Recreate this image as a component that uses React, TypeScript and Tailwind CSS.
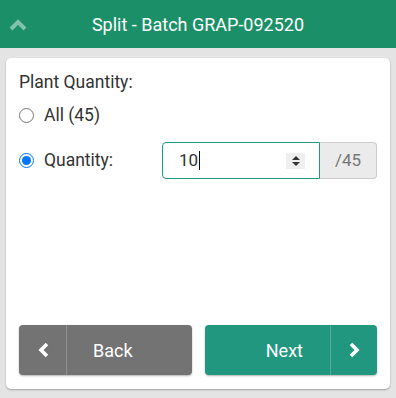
import React from "react";

function ChevronUp() {
  return (
    <svg width="18" height="12" viewBox="0 0 18 12" className="block">
      <polyline
        points="2,10 9,3 16,10"
        fill="none"
        stroke="rgba(255,255,255,0.45)"
        strokeWidth="4"
        strokeLinejoin="miter"
      />
    </svg>
  );
}

function Chevron({ dir }: { dir: "left" | "right" }) {
  const points = dir === "left" ? "10,2 4,8 10,14" : "4,2 10,8 4,14";
  return (
    <svg width="14" height="16" viewBox="0 0 14 16" className="block">
      <polyline
        points={points}
        fill="none"
        stroke="#ffffff"
        strokeWidth="3.6"
        strokeLinejoin="miter"
      />
    </svg>
  );
}

function Spinner() {
  return (
    <span className="flex h-[16px] w-[19px] flex-col items-center justify-center gap-[2px] bg-[#efefef]">
      <span className="h-0 w-0 border-x-[4px] border-b-[4px] border-x-transparent border-b-[#333]" />
      <span className="h-0 w-0 border-x-[4px] border-t-[4px] border-x-transparent border-t-[#333]" />
    </span>
  );
}

export default function App() {
  return (
    <div className="flex h-[398px] w-[396px] flex-col bg-[#e4e4e4] font-['Roboto',sans-serif]">
      <header className="relative flex h-12 shrink-0 items-center justify-center bg-[#1b9068]">
        <span className="absolute left-[9px] top-[19px]">
          <ChevronUp />
        </span>
        <h1 className="text-[18px] text-white">Split - Batch GRAP-092520</h1>
      </header>

      <main className="mx-[6px] mt-[10px] flex h-[331px] flex-col rounded-[5px] bg-white px-[13px] pb-[14px] pt-[14px] shadow-[0_1px_2px_rgba(0,0,0,0.3)]">
        <p className="h-[20px] text-[17.5px] leading-[20px] text-[#333]">Plant Quantity:</p>

        <label className="mt-[13px] flex h-[20px] items-center gap-[10px] text-[17.5px] text-[#333]">
          <input type="radio" name="qty" className="m-0 h-[15px] w-[15px]" />
          All (45)
        </label>

        <div className="mt-[17px] flex items-center">
          <label className="flex w-[143px] items-center gap-[10px] text-[17.5px] text-[#333]">
            <input
              type="radio"
              name="qty"
              defaultChecked
              className="m-0 h-[15px] w-[15px]"
            />
            Quantity:
          </label>
          <div className="flex h-[37px] flex-1">
            <div className="flex w-[158px] items-center rounded-l-[4px] border border-[#1f9a80] pl-[16px] pr-[14px]">
              <span className="text-[17px] text-[#333]">10</span>
              <span className="ml-[1px] h-[19px] w-px bg-[#111]" />
              <span className="ml-auto">
                <Spinner />
              </span>
            </div>
            <div className="flex flex-1 items-center justify-center rounded-r-[4px] border border-l-0 border-[#ccc] bg-[#ebebeb] text-[17px] text-[#777]">
              /45
            </div>
          </div>
        </div>

        <div className="mt-auto flex gap-[13px]">
          <button className="flex h-[50px] flex-1 items-stretch rounded-[4px] bg-[#737373] text-[18px] text-white shadow-[0_1px_2px_rgba(0,0,0,0.3)]">
            <span className="flex w-[48px] items-center justify-center border-r border-white/20 pl-[2px]">
              <Chevron dir="left" />
            </span>
            <span className="flex items-center pl-[26px]">Back</span>
          </button>
          <button className="flex h-[50px] flex-1 items-stretch rounded-[4px] bg-[#21977f] text-[18px] text-white shadow-[0_1px_2px_rgba(0,0,0,0.3)]">
            <span className="flex flex-1 items-center justify-end pr-[27px]">Next</span>
            <span className="flex w-[47px] items-center justify-center border-l border-white/20 pr-[1px]">
              <Chevron dir="right" />
            </span>
          </button>
        </div>
      </main>
    </div>
  );
}
